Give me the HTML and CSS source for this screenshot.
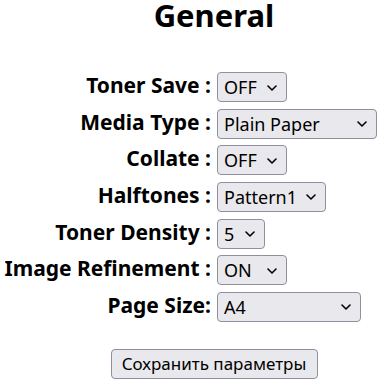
FILE: index.html
```html
<!DOCTYPE html>
<html lang="ru">
<head>
    <meta charset="UTF-8">
    <meta name="viewport" content="width=device-width, initial-scale=1.0">
    <title>General</title>
    <link rel="stylesheet" href="styles.css">
</head>
<body>
    <main class="page">
        <h1>General</h1>
        <form class="settings">
            <label class="settings-label" for="toner-save">Toner Save :</label>
            <div class="field w-70">
                <select id="toner-save"><option>OFF</option><option>ON</option></select>
                <svg class="chevron" viewBox="0 0 10 6"><path d="M1 1l4 4 4-4"/></svg>
            </div>

            <label class="settings-label" for="media-type">Media Type :</label>
            <div class="field w-160">
                <select id="media-type"><option>Plain Paper</option></select>
                <svg class="chevron" viewBox="0 0 10 6"><path d="M1 1l4 4 4-4"/></svg>
            </div>

            <label class="settings-label" for="collate">Collate :</label>
            <div class="field w-70">
                <select id="collate"><option>OFF</option><option>ON</option></select>
                <svg class="chevron" viewBox="0 0 10 6"><path d="M1 1l4 4 4-4"/></svg>
            </div>

            <label class="settings-label" for="halftones">Halftones :</label>
            <div class="field w-109">
                <select id="halftones"><option>Pattern1</option></select>
                <svg class="chevron" viewBox="0 0 10 6"><path d="M1 1l4 4 4-4"/></svg>
            </div>

            <label class="settings-label" for="density">Toner Density :</label>
            <div class="field w-48">
                <select id="density"><option>5</option></select>
                <svg class="chevron" viewBox="0 0 10 6"><path d="M1 1l4 4 4-4"/></svg>
            </div>

            <label class="settings-label" for="refinement">Image Refinement :</label>
            <div class="field w-70">
                <select id="refinement"><option>ON</option><option>OFF</option></select>
                <svg class="chevron" viewBox="0 0 10 6"><path d="M1 1l4 4 4-4"/></svg>
            </div>

            <label class="settings-label" for="page-size">Page Size:</label>
            <div class="field w-144">
                <select id="page-size"><option>A4</option></select>
                <svg class="chevron" viewBox="0 0 10 6"><path d="M1 1l4 4 4-4"/></svg>
            </div>

            <div class="actions">
                <button type="button">Сохранить параметры</button>
            </div>
        </form>
    </main>
</body>
</html>
```

FILE: styles.css
```css
html{
    box-sizing: border-box;
    font-family: "Noto Sans", "Open Sans", sans-serif;
    color: #000;
}
*,
*::after,
*::before{
    box-sizing: inherit;
}
body{
    margin: 0;
}
.page{
    width: 383px;
}
h1{
    margin: 0;
    padding-left: 45px;
    font-size: 31px;
    line-height: 30px;
    text-align: center;
}
.settings{
    display: grid;
    grid-template-columns: 211px 1fr;
    column-gap: 6px;
    row-gap: 6.67px;
    margin-top: 42px;
    align-items: center;
}
.settings-label{
    height: 30px;
    padding-bottom: 4px;
    text-align: right;
    font-weight: bold;
    font-size: 21px;
    line-height: 26px;
    white-space: nowrap;
}
.field{
    position: relative;
    height: 30px;
}
.field select{
    appearance: none;
    width: 100%;
    height: 100%;
    margin: 0;
    padding: 0 24px 0 6px;
    font-family: inherit;
    font-size: 18px;
    color: #000;
    background: #e9e9ed;
    border: 1px solid #8f8f9d;
    border-radius: 4px;
}
.chevron{
    position: absolute;
    right: 10px;
    top: 12.5px;
    width: 10px;
    height: 6px;
    fill: none;
    stroke: #000;
    stroke-width: 1.6;
    stroke-linecap: round;
    stroke-linejoin: round;
    pointer-events: none;
}
.w-48{ width: 48px; }
.w-70{ width: 70px; }
.w-109{ width: 109px; }
.w-144{ width: 144px; }
.w-160{ width: 160px; }
.actions{
    grid-column: 1 / -1;
    padding-left: 45px;
    text-align: center;
    margin-top: 20px;
}
button{
    width: 207px;
    height: 30px;
    padding: 0;
    font-family: inherit;
    font-size: 17px;
    color: #000;
    background: #e9e9ed;
    border: 1px solid #8f8f9d;
    border-radius: 4px;
}
```
